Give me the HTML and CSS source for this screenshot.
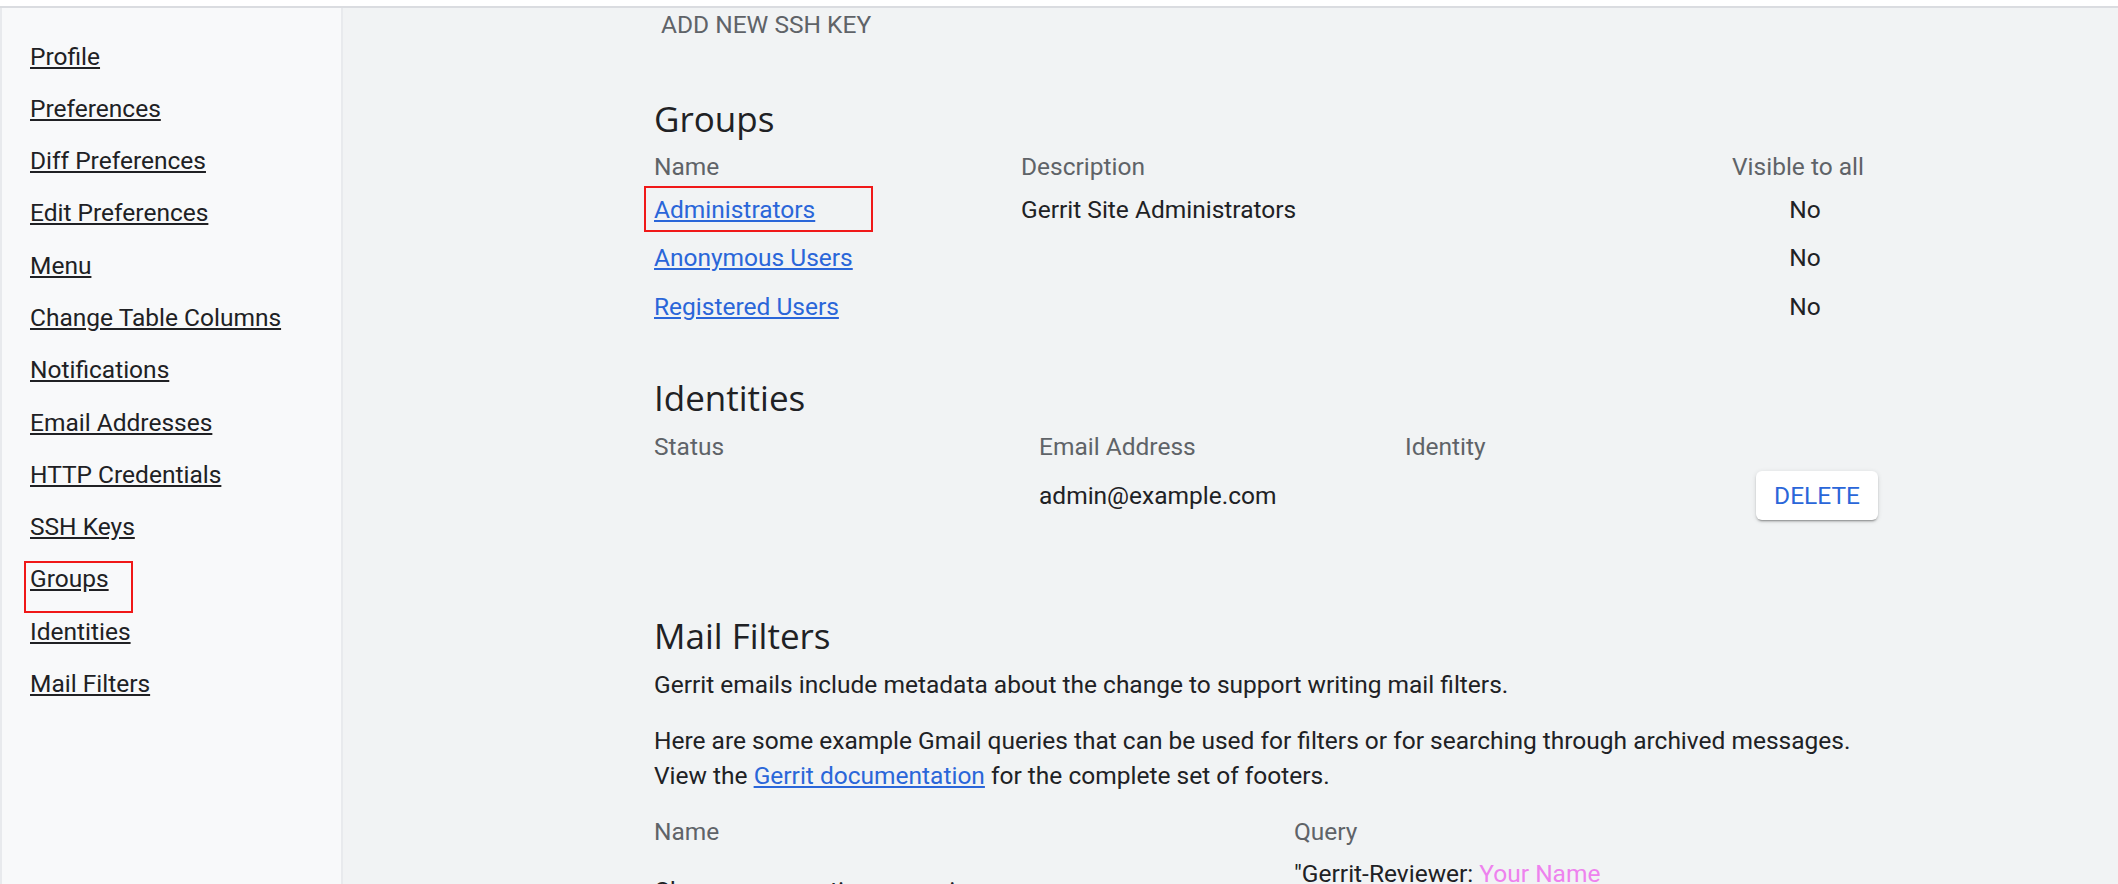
FILE: index.html
```html
<!DOCTYPE html>
<html lang="en">
<head>
<meta charset="utf-8">
<title>Settings</title>
<link rel="stylesheet" href="styles.css">
</head>
<body>
<div class="topbar"></div>
<div class="layout">
  <nav class="sidebar">
    <ul class="nav-list">
      <li><a href="#">Profile</a></li>
      <li><a href="#">Preferences</a></li>
      <li><a href="#">Diff Preferences</a></li>
      <li><a href="#">Edit Preferences</a></li>
      <li><a href="#">Menu</a></li>
      <li><a href="#">Change Table Columns</a></li>
      <li><a href="#">Notifications</a></li>
      <li><a href="#">Email Addresses</a></li>
      <li><a href="#">HTTP Credentials</a></li>
      <li><a href="#">SSH Keys</a></li>
      <li class="marked-nav"><a href="#">Groups</a></li>
      <li><a href="#">Identities</a></li>
      <li><a href="#">Mail Filters</a></li>
    </ul>
  </nav>
  <main class="main">
    <div class="content">
      <button class="text-btn">Add new SSH key</button>

      <h2 class="heading groups-heading">Groups</h2>
      <div class="grid grid-groups">
        <div class="th">Name</div>
        <div class="th">Description</div>
        <div class="th">Visible to all</div>

        <div class="td"><a class="link marked-link" href="#">Administrators</a></div>
        <div class="td">Gerrit Site Administrators</div>
        <div class="td center">No</div>

        <div class="td"><a class="link" href="#">Anonymous Users</a></div>
        <div class="td"></div>
        <div class="td center">No</div>

        <div class="td"><a class="link" href="#">Registered Users</a></div>
        <div class="td"></div>
        <div class="td center">No</div>
      </div>

      <h2 class="heading identities-heading">Identities</h2>
      <div class="grid grid-ident">
        <div class="th">Status</div>
        <div class="th">Email Address</div>
        <div class="th">Identity</div>
        <div class="th"></div>

        <div class="td-id"></div>
        <div class="td-id">admin@example.com</div>
        <div class="td-id"></div>
        <div class="td-id"><button class="raised-btn">Delete</button></div>
      </div>

      <h2 class="heading mail-heading">Mail Filters</h2>
      <p class="para first-para">Gerrit emails include metadata about the change to support writing mail filters.</p>
      <p class="para second-para">Here are some example Gmail queries that can be used for filters or for searching through archived messages. View the <a class="link" href="#">Gerrit documentation</a> for the complete set of footers.</p>
      <div class="grid grid-mail">
        <div class="th">Name</div>
        <div class="th">Query</div>

        <div class="td-mail mid">Changes requesting my review</div>
        <div class="td-mail"><code class="query">"Gerrit-Reviewer: <em>Your Name</em><br>&lt;<em>your.email@example.com</em>&gt;"</code></div>
      </div>
    </div>
  </main>
</div>
</body>
</html>
```
FILE: styles.css
```css
*,
*::before,
*::after {
  box-sizing: border-box;
}

html,
body {
  margin: 0;
  height: 100%;
  overflow: hidden;
}

body {
  font-family: Roboto, "Liberation Sans", Arial, sans-serif;
  font-size: 24.5px;
  line-height: 34px;
  color: #202124;
  background: #f1f3f4;
}

.topbar {
  height: 8px;
  background: #ffffff;
  border-bottom: 2px solid #dadce0;
}

.layout {
  display: flex;
  height: calc(100% - 8px);
}

.sidebar {
  flex: none;
  width: 343px;
  background: #f8f9fa;
  border-left: 2px solid #e8eaed;
  border-right: 2px solid #e8eaed;
  padding: 31.5px 0 0 28px;
}

.nav-list {
  list-style: none;
  margin: 0;
  padding: 0;
}

.nav-list li {
  line-height: 34px;
  margin-bottom: 18.3px;
}

.nav-list a {
  color: #202124;
  text-decoration: underline;
}

.marked-nav {
  position: relative;
}

.marked-nav::after {
  content: "";
  position: absolute;
  left: -6px;
  top: -1px;
  width: 109px;
  height: 52px;
  border: 2px solid #f01818;
  pointer-events: none;
}

.main {
  flex: 1;
  padding: 0 0 0 311px;
}

.content {
  width: 1224px;
}

.text-btn {
  display: block;
  margin: 0;
  padding: 0 0 0 7px;
  border: 0;
  background: none;
  font: inherit;
  line-height: 34px;
  text-transform: uppercase;
  color: #5f6368;
}

.heading {
  margin: 0;
  font-family: "Open Sans", "Noto Sans", sans-serif;
  font-weight: 400;
  font-size: 35px;
  line-height: 48px;
  color: #202124;
}

.groups-heading {
  margin-top: 52.5px;
}

.identities-heading {
  margin-top: 45px;
}

.mail-heading {
  margin-top: 91.5px;
}

.grid {
  display: grid;
}

.grid-groups {
  grid-template-columns: 367px 711px 146px;
  margin-top: 7px;
}

.grid-ident {
  grid-template-columns: 385px 366px 351px 122px;
  margin-top: 8.3px;
}

.grid-mail {
  grid-template-columns: 640px 584px;
  margin-top: 22px;
}

.th {
  color: #5f6368;
  line-height: 34px;
}

.td {
  padding: 9px 0 5.5px;
  line-height: 34px;
}

.center {
  text-align: center;
}

.td-id {
  margin-top: 7.2px;
  height: 49px;
  display: flex;
  align-items: center;
}

.td-mail {
  padding-top: 8px;
  line-height: 34px;
}

.mid {
  align-self: center;
}

.link {
  color: #2a66d9;
  text-decoration: underline;
}

.marked-link {
  display: inline-block;
  position: relative;
}

.marked-link::after {
  content: "";
  position: absolute;
  left: -10px;
  top: -6.5px;
  width: 229px;
  height: 46px;
  border: 2px solid #f01818;
  pointer-events: none;
}

.raised-btn {
  width: 122px;
  height: 49px;
  margin: 0;
  padding: 0;
  border: 0;
  border-radius: 6px;
  background: #ffffff;
  font: inherit;
  text-transform: uppercase;
  color: #2a66d9;
  box-shadow: 0 2px 2px 0 rgba(0, 0, 0, 0.14), 0 1px 5px 0 rgba(0, 0, 0, 0.12), 0 3px 1px -2px rgba(0, 0, 0, 0.2);
}

.para {
  margin: 0;
  line-height: 35px;
}

.first-para {
  margin-top: 7px;
}

.second-para {
  margin-top: 21px;
}

.query {
  font-family: inherit;
  font-size: inherit;
}

.query em {
  font-style: normal;
  color: #ee82ee;
}
```
